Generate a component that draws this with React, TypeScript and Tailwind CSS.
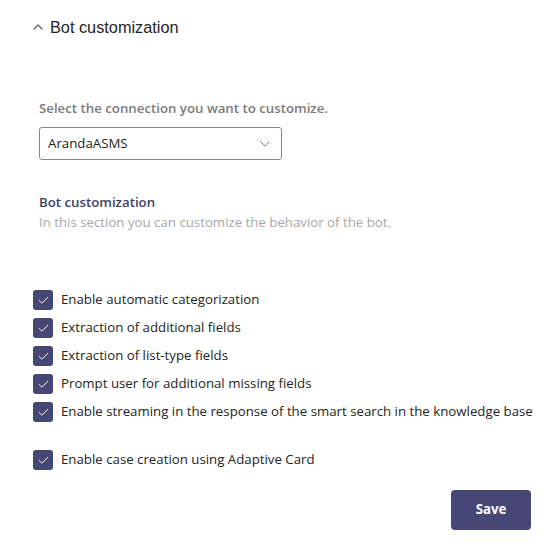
import { ChevronDown, ChevronUp, Check } from "lucide-react";

const options = [
  "Enable automatic categorization",
  "Extraction of additional fields",
  "Extraction of list-type fields",
  "Prompt user for additional missing fields",
  "Enable streaming in the response of the smart search in the knowledge base",
];

function Box({ label }: { label: string }) {
  return (
    <label className="flex h-7 items-center gap-[8px]">
      <span className="flex h-5 w-5 items-center justify-center rounded-[3px] bg-[#464775]">
        <Check size={13} strokeWidth={1.75} className="text-white" />
      </span>
      <span className="text-[13.25px] text-[#252423]">{label}</span>
    </label>
  );
}

export default function App() {
  return (
    <div className="h-[549px] w-[553px] bg-white font-['Open_Sans',sans-serif]">
      <div className="flex items-center gap-[4px] pl-[30px] pt-[15px]">
        <ChevronUp size={16} strokeWidth={2} className="text-[#666]" />
        <span className="font-['Liberation_Sans',sans-serif] text-[16.3px] text-[#242424]">
          Bot customization
        </span>
      </div>

      <div className="pl-[39px] pt-[60px]">
        <p className="text-[13.25px] font-semibold text-[#7a7a7a]">
          Select the connection you want to customize.
        </p>
        <div className="mt-[8px] flex h-[33px] w-[243px] items-center justify-between rounded-[3px] border border-[#8a8886] pl-[8px] pr-[8px]">
          <span className="text-[13.25px] text-[#252423]">ArandaASMS</span>
          <ChevronDown size={16} strokeWidth={1.2} className="text-[#605e5c]" />
        </div>

        <p className="mt-[33px] text-[13.25px] font-semibold text-[#3d3e66]">Bot customization</p>
        <p className="text-[13.25px] text-[#a8a8a8]">
          In this section you can customize the behavior of the bot.
        </p>
      </div>

      <div className="pl-[33px] pt-[53px]">
        {options.map((o) => (
          <Box key={o} label={o} />
        ))}
        <div className="mt-[20px]">
          <Box label="Enable case creation using Adaptive Card" />
        </div>
      </div>

      <div className="flex justify-end pr-[22px] pt-[16px]">
        <button className="h-[40px] w-[80px] rounded-[4px] bg-[#464775] text-[13.25px] font-bold text-white">
          Save
        </button>
      </div>
    </div>
  );
}
